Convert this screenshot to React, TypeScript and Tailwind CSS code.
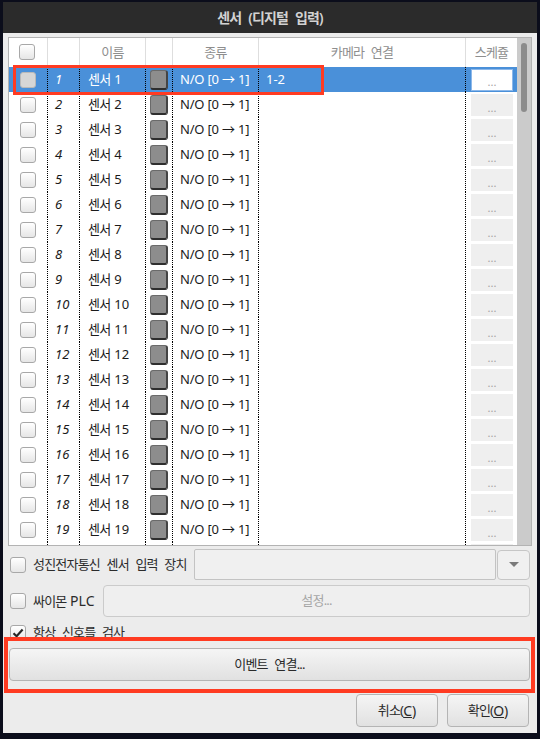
import React from "react";

type Sensor = { id: number; name: string; kind: string; camera: string };

const sensors: Sensor[] = Array.from({ length: 20 }, (_, i) => ({
  id: i + 1,
  name: `센서 ${i + 1}`,
  kind: "N/O [0 → 1]",
  camera: i === 0 ? "1-2" : "",
}));

// column widths, left to right (right borders included)
const W = {
  check: "w-[39px]",
  num: "w-[32px]",
  name: "w-[66px]",
  color: "w-[27px]",
  kind: "w-[86px]",
  camera: "w-[207px]",
  sched: "w-[51px]",
};

function Ko({ children, className = "" }: { children: React.ReactNode; className?: string }) {
  return <span className={`text-[13px] tracking-[-0.8px] [word-spacing:4px] ${className}`}>{children}</span>;
}

function CheckBox({ checked, flat }: { checked?: boolean; flat?: boolean }) {
  return (
    <span
      className={`flex h-[16px] w-[16px] shrink-0 items-center justify-center rounded-[3px] border ${
        flat ? "border-[#b9b9b9] bg-[#d6d6d6]" : "border-[#a8a8a8] bg-linear-to-b from-white to-[#e6e6e6]"
      }`}
    >
      {checked && (
        <svg width="12" height="12" viewBox="0 0 12 12">
          <path d="M1.5 6.2 L4.6 9.2 L10.6 2.6" fill="none" stroke="#262626" strokeWidth="2.2" />
        </svg>
      )}
    </span>
  );
}

// last row is only partly visible under the table edge, so it carries no text
function SensorRow({ s, selected, cut }: { s: Sensor; selected: boolean; cut?: boolean }) {
  const cell = "flex h-full shrink-0 items-center overflow-hidden whitespace-nowrap border-r border-dotted border-black";
  return (
    <div className={`flex h-[25px] shrink-0 text-[13px] ${selected ? "bg-[#4a90d9] text-white" : "text-[#1b1b1b]"}`}>
      <div className={`${cell} ${W.check} justify-center pr-[1px]`}>
        <CheckBox flat={selected} />
      </div>
      <div className={`${cell} ${W.num} pl-[7px] italic`}>{!cut && s.id}</div>
      <div className={`${cell} ${W.name} pl-[8px]`}>
        {!cut && (
          <>
            <Ko>센서</Ko>
            <span className="ml-[4px]">{s.id}</span>
          </>
        )}
      </div>
      <div className={`${cell} ${W.color} justify-center`}>
        <span className="h-[20px] w-[18px] rounded-[3px] border border-[#6a6a6a] border-b-2 border-r-2 border-b-[#2e2e2e] border-r-[#444] bg-[#8d8d8d]" />
      </div>
      <div className={`${cell} ${W.kind} pl-[7px] tracking-[-0.2px]`}>{!cut && s.kind}</div>
      <div className={`${cell} ${W.camera} pl-[7px]`}>{!cut && s.camera}</div>
      <div className={`flex h-full ${W.sched} shrink-0 pl-[5px] pt-[2px] pb-[1px]`}>
        <span
          className={`flex w-[42px] items-end justify-center pb-[3px] text-[11px] leading-none text-[#a3a3a3] ${
            selected ? "border border-[#8cb8ea] bg-white" : "bg-[#efefef]"
          }`}
        >
          {!cut && "..."}
        </span>
      </div>
    </div>
  );
}

function SensorTable() {
  const head = "flex h-full shrink-0 items-center justify-center border-r border-[#dedede] text-[#8e8e8e]";
  return (
    <div className="flex h-[509px] shrink-0 overflow-hidden border border-[#b3b3b3] bg-white">
      <div className="flex w-[508px] flex-col overflow-hidden">
        <div className="flex h-[29px] shrink-0">
          <div className={`${head} ${W.check} pr-[2px] pb-[1px]`}>
            <CheckBox />
          </div>
          <div className={`${head} ${W.num}`} />
          <div className={`${head} ${W.name}`}>
            <Ko>이름</Ko>
          </div>
          <div className={`${head} ${W.color}`} />
          <div className={`${head} ${W.kind}`}>
            <Ko>종류</Ko>
          </div>
          <div className={`${head} ${W.camera}`}>
            <Ko>카메라 연결</Ko>
          </div>
          <div className={`${head} ${W.sched} border-r-0`}>
            <Ko>스케쥴</Ko>
          </div>
        </div>
        {sensors.map((s) => (
          <SensorRow key={s.id} s={s} selected={s.id === 1} cut={s.id === 20} />
        ))}
      </div>
      {/* vertical scrollbar */}
      <div className="flex w-[14px] shrink-0 justify-center bg-[#cbcbcb] pt-[5px]">
        <div className="h-[69px] w-[6px] rounded-full bg-[#8c8c8c]" />
      </div>
    </div>
  );
}

function Button({ children, className = "" }: { children: React.ReactNode; className?: string }) {
  return (
    <button
      className={`flex h-[33px] items-center justify-center rounded-[4px] border border-[#b4b4b4] bg-linear-to-b from-[#f5f5f5] to-[#e1e1e1] text-[14px] text-[#2a2a2a] ${className}`}
    >
      {children}
    </button>
  );
}

export default function App() {
  return (
    <div className="relative flex h-[739px] w-[540px] flex-col bg-[#0b0d1b] pt-[2px] pr-[3px] pb-[6px] pl-[3px] font-[family-name:'Noto_Sans','Noto_Sans_CJK_KR',sans-serif] text-[14px]">
      <div className="flex h-[31px] shrink-0 items-center justify-center bg-[#2b2b2b] font-semibold text-[#d2d2d2]">
        <Ko className="text-[14px]">센서 (디지털 입력)</Ko>
      </div>

      <div className="flex flex-1 flex-col bg-[#ececec] px-[5px] pt-[4px]">
        <SensorTable />

        <div className="mt-[3px] flex h-[31px] items-center pr-[2px] text-[#2b2b2b]">
          <div className="flex w-[186px] items-center gap-[7px] pl-[2px]">
            <CheckBox />
            <Ko className="whitespace-nowrap">성진전자통신 센서 입력 장치</Ko>
          </div>
          <div className="h-full flex-1 rounded-[2px] border border-[#c3c3c3] bg-[#f0f0f0]" />
          <div className="ml-[1px] flex h-[30px] w-[33px] items-center justify-center rounded-[4px] border border-[#c6c6c6] bg-[#f0f0f0]">
            <svg width="10" height="6" viewBox="0 0 10 6">
              <polygon points="0,0 10,0 5,5" fill="#7a7a7a" />
            </svg>
          </div>
        </div>

        <div className="mt-[5px] flex h-[32px] items-center pr-[2px] text-[#2b2b2b]">
          <div className="flex w-[95px] items-center gap-[7px] pl-[2px]">
            <CheckBox />
            <span className="whitespace-nowrap">
              <Ko>싸이몬</Ko> PLC
            </span>
          </div>
          <div className="flex h-full flex-1 items-center justify-center rounded-[4px] border border-[#cbcbcb] bg-[#efefef] text-[#a6a6a6]">
            <Ko>설정...</Ko>
          </div>
        </div>

        <div className="mt-[3px] flex h-[26px] items-center gap-[7px] pl-[2px] text-[#2b2b2b]">
          <CheckBox checked />
          <Ko>항상 신호를 검사</Ko>
        </div>

        <Button className="mt-[2px] ml-[1px] mr-[2px]">
          <Ko>이벤트 연결...</Ko>
        </Button>

        <div className="mt-[13px] flex justify-end gap-[9px] pr-[3px]">
          <Button className="w-[82px]">
            <Ko>취소(</Ko>
            <span className="underline">C</span>)
          </Button>
          <Button className="w-[82px]">
            <Ko>확인(</Ko>
            <span className="underline">O</span>)
          </Button>
        </div>
      </div>

      {/* highlight frames drawn over the dialog */}
      <div className="pointer-events-none absolute left-[13px] top-[65px] h-[30px] w-[311px] border-[3px] border-[#ff3b22]" />
      <div className="pointer-events-none absolute left-[4px] top-[637px] h-[56px] w-[531px] border-4 border-[#ff3b22]" />
    </div>
  );
}
